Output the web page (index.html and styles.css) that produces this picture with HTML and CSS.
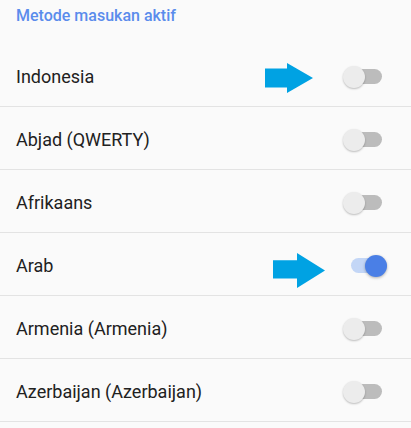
FILE: index.html
```html
<!DOCTYPE html>
<html>
<head>
<meta charset="utf-8">
<link rel="stylesheet" href="styles.css">
</head>
<body>
<div class="screen">
  <div class="header">Metode masukan aktif</div>
  <ul class="list">
    <li class="row"><span class="label">Indonesia</span><span class="switch"><span class="track"></span><span class="thumb"></span></span>
      <svg class="arrow arrow-1" viewBox="0 0 48 30"><polygon points="0,5.5 22,5.5 22,0 48,15 22,30 22,24.5 0,24.5"/></svg>
    </li>
    <li class="row"><span class="label">Abjad (QWERTY)</span><span class="switch"><span class="track"></span><span class="thumb"></span></span></li>
    <li class="row"><span class="label">Afrikaans</span><span class="switch"><span class="track"></span><span class="thumb"></span></span></li>
    <li class="row"><span class="label">Arab</span><span class="switch on"><span class="track"></span><span class="thumb"></span></span>
      <svg class="arrow arrow-2" viewBox="0 0 52 35"><polygon points="0,7.3 24,7.3 24,0 52,17.5 24,35 24,25.6 0,25.6"/></svg>
    </li>
    <li class="row"><span class="label">Armenia (Armenia)</span><span class="switch"><span class="track"></span><span class="thumb"></span></span></li>
    <li class="row"><span class="label">Azerbaijan (Azerbaijan)</span><span class="switch"><span class="track"></span><span class="thumb"></span></span></li>
  </ul>
</div>
</body>
</html>
```
FILE: styles.css
```css
html, body {
  margin: 0;
  padding: 0;
  background: #fafafa;
}
.screen {
  width: 411px;
  height: 428px;
  overflow: hidden;
  font-family: Roboto, "Noto Sans", sans-serif;
  background: #fafafa;
}
.header {
  height: 44px;
  box-sizing: border-box;
  padding: 6px 16px 0;
  font-size: 16px;
  font-weight: 500;
  color: #5a8cec;
  line-height: 20px;
}
.list {
  list-style: none;
  margin: 0;
  padding: 0;
}
.row {
  position: relative;
  height: 63px;
  box-sizing: border-box;
  border-bottom: 1px solid #e3e3e3;
  display: flex;
  align-items: center;
  justify-content: space-between;
  padding: 3px 26px 0 16px;
}
.label {
  font-size: 18px;
  color: #212121;
}
.switch {
  position: relative;
  width: 42px;
  height: 22px;
}
.track {
  position: absolute;
  left: 3px;
  top: 3.5px;
  width: 36px;
  height: 15px;
  border-radius: 7.5px;
  background: #bcbcbc;
}
.thumb {
  position: absolute;
  left: 0;
  top: 0;
  width: 22px;
  height: 22px;
  border-radius: 50%;
  background: #ececec;
  box-shadow: 0 1px 2px rgba(0,0,0,0.25);
}
.switch.on .track {
  background: #c3d6f6;
  left: 8px;
}
.switch.on .thumb {
  left: 22px;
  background: #4a7fe6;
  box-shadow: 0 1px 3px rgba(0,0,0,0.3);
}
.arrow {
  position: absolute;
  fill: #00a2e3;
}
.arrow-1 {
  left: 265px;
  top: 19px;
  width: 48px;
  height: 30px;
}
.arrow-2 {
  left: 273px;
  top: 20px;
  width: 52px;
  height: 35px;
}
```
